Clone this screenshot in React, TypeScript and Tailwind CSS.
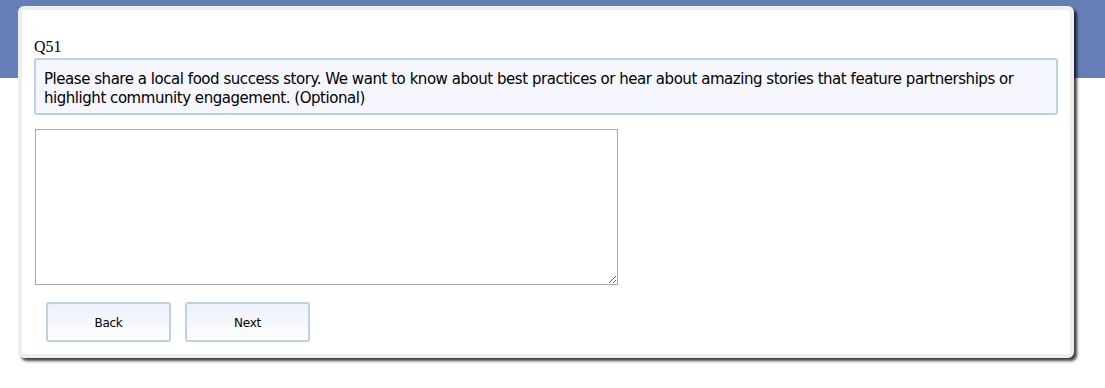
export default function App() {
  return (
    <div className="relative w-[1105px] h-[388px] bg-white overflow-hidden">
      <div className="h-[78px] bg-[#667eb6]" />
      <div className="absolute left-[18px] top-[6px] w-[1056px] h-[352px] rounded-[6px] border-4 border-[#eeeeee] bg-white shadow-[3px_3px_3px_rgba(0,0,0,0.75)] px-3 pt-[28px]">
        <div className="text-[16px] leading-[18px] text-black font-['Liberation_Serif',serif]">Q51</div>
        <div className="mt-[2px] rounded-[3px] border-2 border-[#bcd3df] bg-[#f5f6fe] pl-2 pr-2 pt-[10px] pb-[5px] text-[15px] leading-[19px] text-black font-['DejaVu_Sans',sans-serif] tracking-[-0.46px]">
          Please share a local food success story. We want to know about best practices or hear about amazing stories that feature partnerships or highlight community engagement. (Optional)
        </div>
        <textarea className="mt-[14px] ml-px block w-[583px] h-[156px] border border-[#a9a9a9] bg-white resize-y" />
        <div className="mt-[17px] ml-3 flex gap-[14px]">
          <button className="w-[125px] h-[40px] pt-px rounded-[3px] border-2 border-[#bcd3df] bg-gradient-to-b from-[#eef0fd] to-white text-[12px] text-black font-['DejaVu_Sans',sans-serif] tracking-[-0.3px]">
            Back
          </button>
          <button className="w-[125px] h-[40px] pt-px rounded-[3px] border-2 border-[#bcd3df] bg-gradient-to-b from-[#eef0fd] to-white text-[12px] text-black font-['DejaVu_Sans',sans-serif] tracking-[-0.3px]">
            Next
          </button>
        </div>
      </div>
    </div>
  );
}
